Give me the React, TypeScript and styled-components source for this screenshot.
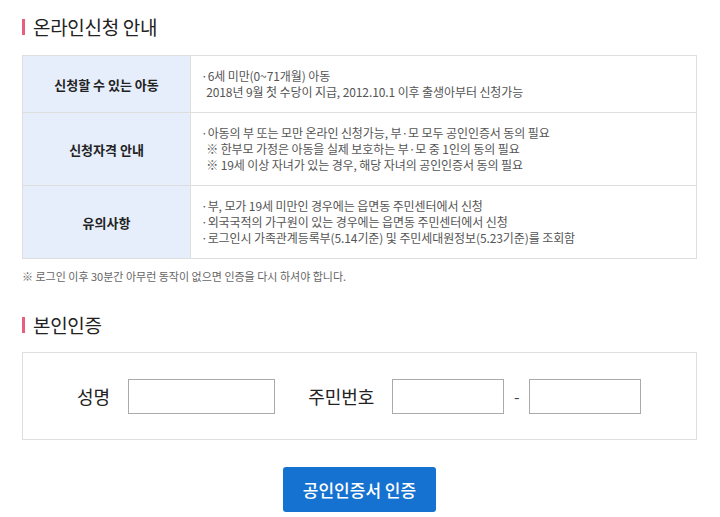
import React, { ReactElement } from 'react'
import styled, { createGlobalStyle } from 'styled-components'

const GlobalStyle = createGlobalStyle`
    html, body {
        margin: 0;
        padding: 0;
        background: #ffffff;
        font-family: 'Noto Sans CJK KR', 'Noto Sans', sans-serif;
    }
`

const rows = [
    {
        head: '신청할 수 있는 아동',
        lines: [
            '·6세 미만(0~71개월) 아동',
            '  2018년 9월 첫 수당이 지급, 2012.10.1 이후 출생아부터 신청가능',
        ],
        height: 56,
    },
    {
        head: '신청자격 안내',
        lines: [
            '·아동의 부 또는 모만 온라인 신청가능, 부·모 모두 공인인증서 동의 필요',
            '  ※ 한부모 가정은 아동을 실제 보호하는 부·모 중 1인의 동의 필요',
            '  ※ 19세 이상 자녀가 있는 경우, 해당 자녀의 공인인증서 동의 필요',
        ],
        height: 72,
    },
    {
        head: '유의사항',
        lines: [
            '·부, 모가 19세 미만인 경우에는 읍면동 주민센터에서 신청',
            '·외국국적의 가구원이 있는 경우에는 읍면동 주민센터에서 신청',
            '·로그인시 가족관계등록부(5.14기준) 및 주민세대원정보(5.23기준)를 조회함',
        ],
        height: 72,
    },
]

const App = () : ReactElement => {
    return <Page>
        <GlobalStyle />
        <Title>온라인신청 안내</Title>
        <Table>
            {
                rows.map(row => <Row key = { row.head } $height = { row.height }>
                    <Head>{ row.head }</Head>
                    <Cell>
                        { row.lines.map(line => <Line key = { line }>{ line }</Line>) }
                    </Cell>
                </Row>)
            }
        </Table>
        <Note>※ 로그인 이후 30분간 아무런 동작이 없으면 인증을 다시 하셔야 합니다.</Note>
        <Title $top = { 29 }>본인인증</Title>
        <AuthBox>
            <Label>성명</Label>
            <Input $width = { 147 } type = 'text' />
            <Label $left = { 33 }>주민번호</Label>
            <Input $width = { 112 } type = 'text' />
            <Dash>-</Dash>
            <Input $width = { 112 } type = 'password' />
        </AuthBox>
        <ButtonRow>
            <Button>공인인증서 인증</Button>
        </ButtonRow>
    </Page>
}

const Page = styled.div`
    width: 675px;
    padding: 14px 0 0 22px;
`

const Title = styled.h2<{ $top?: number }>`
    display: flex;
    align-items: center;
    gap: 8px;
    margin: ${p => p.$top ?? 0}px 0 0;
    font-size: 19px;
    font-weight: 400;
    line-height: 26px;
    letter-spacing: -0.3px;
    color: #222;

    &::before {
        content: '';
        display: block;
        width: 3px;
        height: 16px;
        background: #e5607c;
    }
`

const Table = styled.div`
    margin-top: 15px;
    border: 1px solid #dedede;
    border-bottom-width: 0;
`

const Row = styled.div<{ $height: number }>`
    display: grid;
    grid-template-columns: 168px 1fr;
    height: ${p => p.$height}px;
    border-bottom: 1px solid #dedede;
`

const Head = styled.div`
    display: flex;
    align-items: center;
    justify-content: center;
    background: #e6eefb;
    border-right: 1px solid #dedede;
    font-size: 13px;
    font-weight: 700;
    color: #222;
`

const Cell = styled.div`
    display: flex;
    flex-direction: column;
    justify-content: center;
    padding-left: 10px;
`

const Line = styled.div`
    font-size: 12px;
    line-height: 16px;
    letter-spacing: -0.1px;
    color: #555;
    white-space: pre;
`

const Note = styled.p`
    margin: 10px 0 0;
    font-size: 11px;
    line-height: 14px;
    color: #666;
`

const AuthBox = styled.div`
    display: flex;
    align-items: center;
    height: 86px;
    margin-top: 14px;
    padding-left: 54px;
    border: 1px solid #dedede;
`

const Label = styled.span<{ $left?: number }>`
    margin: 0 18px 0 ${p => p.$left ?? 0}px;
    font-size: 18px;
    color: #222;
`

const Input = styled.input<{ $width: number }>`
    box-sizing: border-box;
    width: ${p => p.$width}px;
    height: 35px;
    border: 1px solid #aaa;
    background: #fff;
    outline: none;
`

const Dash = styled.span`
    width: 25px;
    text-align: center;
    font-size: 16px;
    color: #444;
`

const ButtonRow = styled.div`
    display: flex;
    justify-content: center;
    margin-top: 27px;
`

const Button = styled.button`
    width: 153px;
    height: 45px;
    border: none;
    border-radius: 3px;
    background: #1672d0;
    color: #fff;
    font-family: inherit;
    font-size: 17px;
    font-weight: 500;
`

export default App
